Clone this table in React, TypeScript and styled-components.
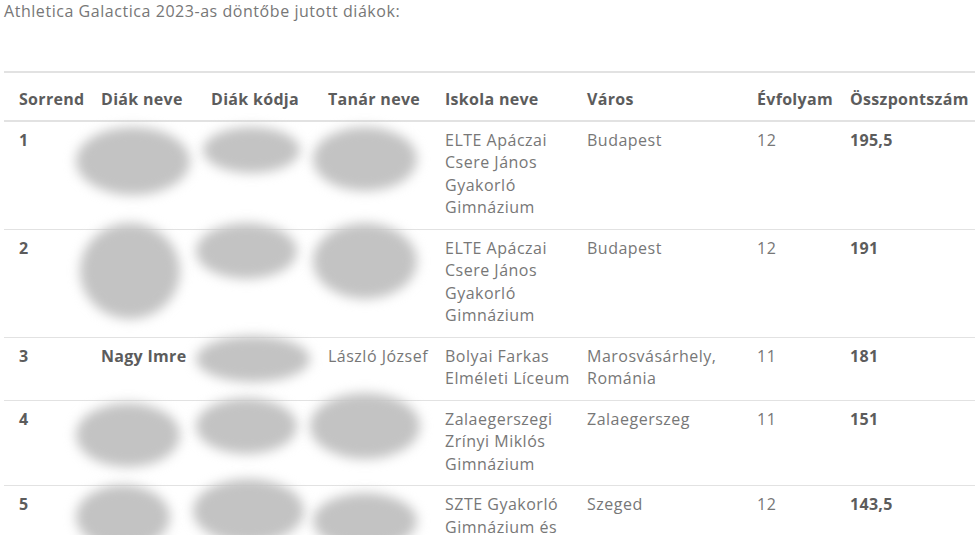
import React from "react";
import styled, { createGlobalStyle } from "styled-components";

const GlobalStyle = createGlobalStyle`
  html, body {
    margin: 0;
    padding: 0;
    background: #fff;
    overflow: hidden;
  }
  body {
    font-family: "Open Sans", "Noto Sans", sans-serif;
    color: #777;
  }
`;

const Page = styled.div`
  padding: 0 0 0 4px;
  width: 980px;
`;

const Title = styled.p`
  margin: 0 0 48px;
  font-size: 16px;
  line-height: 23px;
  letter-spacing: 0.55px;
  color: #777;
`;

const Table = styled.table`
  border-collapse: collapse;
  table-layout: fixed;
  width: 976px;
  font-size: 16px;
  line-height: 22.5px;
  letter-spacing: 0.5px;
`;

const Th = styled.th<{ $first?: boolean }>`
  text-align: left;
  font-weight: 700;
  color: #5c5c5c;
  letter-spacing: 0.3px;
  padding: 15px 8px 9px ${(p) => (p.$first ? "15px" : "8px")};
  border-top: 2px solid #e2e2e2;
  border-bottom: 2px solid #e2e2e2;
  white-space: nowrap;
`;

const Tr = styled.tr`
  border-bottom: 1px solid #e2e2e2;
`;

const Td = styled.td<{ $first?: boolean; $bold?: boolean }>`
  position: relative;
  vertical-align: top;
  padding: 7px 8px 10px ${(p) => (p.$first ? "15px" : "8px")};
  font-weight: ${(p) => (p.$bold ? 700 : 400)};
  letter-spacing: ${(p) => (p.$bold ? "0.3px" : "0.5px")};
  color: ${(p) => (p.$bold ? "#5c5c5c" : "#777")};
  white-space: nowrap;
`;

const Line = styled.span`
  display: block;
`;

/* blurred-out personal data, placed over its cell */
const Blur = styled.span<{ $x: number; $y: number; $w: number; $h: number }>`
  position: absolute;
  left: ${(p) => p.$x + 5}px;
  top: ${(p) => p.$y + 5}px;
  width: ${(p) => p.$w - 10}px;
  height: ${(p) => p.$h - 10}px;
  border-radius: 50%;
  background: #c3c3c3;
  filter: blur(6px);
`;

type Box = [number, number, number, number];

type Row = {
  rank: string;
  name?: string;
  teacher?: string;
  blurs: (Box | null)[];
  school: string[];
  city: string[];
  grade: string;
  score: string;
};

const widths = [89, 110, 117, 117, 142, 170, 93, 138];

const headers = [
  "Sorrend",
  "Diák neve",
  "Diák kódja",
  "Tanár neve",
  "Iskola neve",
  "Város",
  "Évfolyam",
  "Összpontszám",
];

const elte = ["ELTE Apáczai", "Csere János", "Gyakorló", "Gimnázium"];

const rows: Row[] = [
  {
    rank: "1",
    blurs: [
      [-22, 0, 124, 78],
      [-5, 0, 107, 56],
      [-12, 0, 114, 74],
    ],
    school: elte,
    city: ["Budapest"],
    grade: "12",
    score: "195,5",
  },
  {
    rank: "2",
    blurs: [
      [-18, -12, 110, 106],
      [-12, -12, 111, 66],
      [-12, -12, 114, 86],
    ],
    school: elte,
    city: ["Budapest"],
    grade: "12",
    score: "191",
  },
  {
    rank: "3",
    name: "Nagy Imre",
    teacher: "László József",
    blurs: [null, [-12, -7, 124, 56], null],
    school: ["Bolyai Farkas", "Elméleti Líceum"],
    city: ["Marosvásárhely,", "Románia"],
    grade: "11",
    score: "181",
  },
  {
    rank: "4",
    blurs: [
      [-22, -3, 114, 74],
      [-12, -8, 111, 66],
      [-15, -13, 120, 76],
    ],
    school: ["Zalaegerszegi", "Zrínyi Miklós", "Gimnázium"],
    city: ["Zalaegerszeg"],
    grade: "11",
    score: "151",
  },
  {
    rank: "5",
    blurs: [
      [-22, -6, 104, 74],
      [-15, -12, 121, 74],
      [-12, 2, 114, 66],
    ],
    school: ["SZTE Gyakorló", "Gimnázium és", "Általános Iskola"],
    city: ["Szeged"],
    grade: "12",
    score: "143,5",
  },
];

const Lines = ({ items }: { items: string[] }) => (
  <>
    {items.map((t) => (
      <Line key={t}>{t}</Line>
    ))}
  </>
);

const BlurCell = ({ box, text, bold }: { box: Box | null; text?: string; bold?: boolean }) => (
  <Td $bold={bold}>
    {text}
    {box && <Blur $x={box[0]} $y={box[1]} $w={box[2]} $h={box[3]} />}
  </Td>
);

export default function App() {
  return (
    <Page>
      <GlobalStyle />
      <Title>Athletica Galactica 2023-as döntőbe jutott diákok:</Title>
      <Table>
        <colgroup>
          {widths.map((w, i) => (
            <col key={i} style={{ width: w }} />
          ))}
        </colgroup>
        <thead>
          <tr>
            {headers.map((h, i) => (
              <Th key={h} $first={i === 0}>
                {h}
              </Th>
            ))}
          </tr>
        </thead>
        <tbody>
          {rows.map((r) => (
            <Tr key={r.rank}>
              <Td $first $bold>
                {r.rank}
              </Td>
              <BlurCell box={r.blurs[0]} text={r.name} bold />
              <BlurCell box={r.blurs[1]} />
              <BlurCell box={r.blurs[2]} text={r.teacher} />
              <Td>
                <Lines items={r.school} />
              </Td>
              <Td>
                <Lines items={r.city} />
              </Td>
              <Td>{r.grade}</Td>
              <Td $bold>{r.score}</Td>
            </Tr>
          ))}
        </tbody>
      </Table>
    </Page>
  );
}
